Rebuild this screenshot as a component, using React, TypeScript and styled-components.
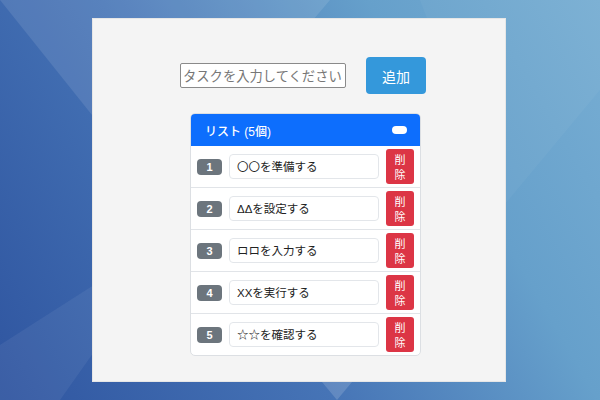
import styled, { createGlobalStyle } from "styled-components";

const GlobalStyle = createGlobalStyle`
  html, body {
    margin: 0;
    padding: 0;
  }
  body {
    font-family: "Liberation Sans", "Noto Sans CJK JP", sans-serif;
  }
`;

const Page = styled.div`
  position: relative;
  width: 600px;
  height: 400px;
  overflow: hidden;
  box-sizing: border-box;
  padding: 18px 0 0 92px;
  background: linear-gradient(60deg, #2f55a0 0%, #4674b6 40%, #66a0cb 72%, #78aed3 100%);
`;

const Backdrop = styled.svg`
  position: absolute;
  inset: 0;
  width: 600px;
  height: 400px;
`;

const Panel = styled.div`
  position: relative;
  width: 414px;
  height: 364px;
  box-sizing: border-box;
  background: #f4f4f4;
  border: 1px solid #e6e6e6;
  padding: 38px 0 0 87px;
  display: flex;
  flex-direction: column;
  gap: 19px;
`;

const Form = styled.div`
  display: flex;
  align-items: center;
  gap: 20px;
`;

const TaskInput = styled.input`
  width: 166px;
  height: 25px;
  box-sizing: border-box;
  border: 1px solid #8a8a8a;
  border-radius: 2px;
  padding: 0 2px;
  font-family: "Noto Sans CJK JP", sans-serif;
  font-size: 13.3px;
  background: #fff;
  &::placeholder {
    color: #777;
  }
`;

const AddButton = styled.button`
  width: 60px;
  height: 37px;
  border: none;
  border-radius: 4px;
  background: #3498db;
  color: #fff;
  font-family: "Noto Sans CJK JP", sans-serif;
  font-size: 14px;
  cursor: pointer;
`;

const Card = styled.div`
  margin-left: 10px;
  width: 231px;
  box-sizing: border-box;
  border: 1px solid #dcdfe3;
  border-radius: 5px;
  overflow: hidden;
  background: #fff;
`;

const CardHeader = styled.div`
  height: 32px;
  background: #0d6efd;
  color: #fff;
  display: flex;
  align-items: center;
  justify-content: space-between;
  padding: 0 13px 0 14px;
  font-size: 12px;
  font-weight: 500;
`;

const Toggle = styled.span`
  width: 15px;
  height: 8px;
  border-radius: 4px;
  background: #fff;
`;

const Row = styled.div`
  height: 41px;
  display: flex;
  align-items: center;
  gap: 7px;
  padding: 0 6px;
  border-bottom: 1px solid #e1e4e8;
  &:last-child {
    border-bottom: none;
  }
`;

const Badge = styled.span`
  width: 25px;
  height: 16px;
  border-radius: 4px;
  background: #6c757d;
  color: #fff;
  font-size: 11px;
  font-weight: 700;
  display: flex;
  align-items: center;
  justify-content: center;
`;

const ItemText = styled.div`
  width: 150px;
  height: 25px;
  box-sizing: border-box;
  border: 1px solid #e3e6ea;
  border-radius: 4px;
  padding: 0 7px 1px;
  display: flex;
  align-items: center;
  font-size: 11.5px;
  color: #222;
  font-family: "Liberation Sans", "Noto Sans CJK JP", sans-serif;
`;

const DeleteButton = styled.button`
  width: 28px;
  height: 35px;
  margin-left: auto;
  padding: 0;
  border: none;
  border-radius: 3px;
  background: #dc3545;
  color: #fff;
  font-family: "Noto Sans CJK JP", sans-serif;
  font-size: 11px;
  line-height: 15px;
  cursor: pointer;
`;

const tasks = ["〇〇を準備する", "ΔΔを設定する", "ロロを入力する", "XXを実行する", "☆☆を確認する"];

export default function App() {
  return (
    <>
      <GlobalStyle />
      <Page>
        <Backdrop viewBox="0 0 600 400">
          <polygon points="0,0 330,0 160,200" fill="#ffffff" opacity="0.1" />
          <polygon points="0,345 0,400 60,400 180,230" fill="#ffffff" opacity="0.06" />
          <polygon points="600,90 600,0 420,0 500,210" fill="#ffffff" opacity="0.04" />
          <polygon points="322,382 352,382 337,400" fill="#ffffff" opacity="0.15" />
        </Backdrop>
        <Panel>
          <Form>
            <TaskInput placeholder="タスクを入力してください" />
            <AddButton>追加</AddButton>
          </Form>
          <Card>
            <CardHeader>
              <span>リスト ({tasks.length}個)</span>
              <Toggle />
            </CardHeader>
            {tasks.map((t, i) => (
              <Row key={t}>
                <Badge>{i + 1}</Badge>
                <ItemText>{t}</ItemText>
                <DeleteButton>
                  削<br />除
                </DeleteButton>
              </Row>
            ))}
          </Card>
        </Panel>
      </Page>
    </>
  );
}
